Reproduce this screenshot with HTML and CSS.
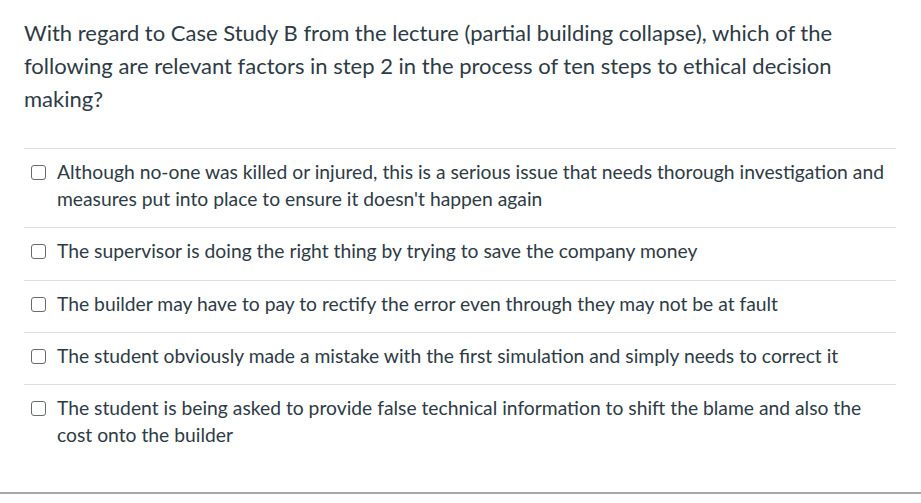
FILE: index.html
```html
<!DOCTYPE html>
<html>
<head>
<meta charset="utf-8">
<link rel="stylesheet" href="styles.css">
</head>
<body>
<div class="quiz">
  <div class="question">
    <p class="question-text">With regard to Case Study B from the lecture (partial building collapse), which of the following are relevant factors in step 2 in the process of ten steps to ethical decision making?</p>
    <div class="answers">
      <label class="answer"><span class="box"></span><span class="answer-text">Although no-one was killed or injured, this is a serious issue that needs thorough investigation and measures put into place to ensure it doesn't happen again</span></label>
      <label class="answer"><span class="box"></span><span class="answer-text">The supervisor is doing the right thing by trying to save the company money</span></label>
      <label class="answer"><span class="box"></span><span class="answer-text">The builder may have to pay to rectify the error even through they may not be at fault</span></label>
      <label class="answer"><span class="box"></span><span class="answer-text">The student obviously made a mistake with the first simulation and simply needs to correct it</span></label>
      <label class="answer"><span class="box"></span><span class="answer-text">The student is being asked to provide false technical information to shift the blame and also the cost onto the builder</span></label>
    </div>
  </div>
  <div class="footer-rule"></div>
</div>
</body>
</html>
```

FILE: styles.css
```css
html, body {
  margin: 0;
  padding: 0;
  background: #ffffff;
}
body {
  font-family: Lato, "Open Sans", sans-serif;
  color: #2d3b45;
  width: 921px;
  height: 503px;
  overflow: hidden;
}
.question {
  padding: 16px 25px 0 24px;
}
.question-text {
  margin: 0 0 33px 0;
  font-size: 22px;
  line-height: 33px;
}
.answers {
  display: flex;
  flex-direction: column;
}
.answer {
  display: flex;
  align-items: flex-start;
  gap: 11px;
  border-top: 1px solid #dcdedf;
  padding: 9px 0 15.3px 7px;
  font-size: 19.3px;
  line-height: 27px;
}
.answer:last-child {
  padding-bottom: 44px;
}
.box {
  flex: none;
  width: 13px;
  height: 13px;
  margin-top: 7px;
  border: 1.5px solid #666a6d;
  border-radius: 3px;
  background: #fff;
}
.answer-text {
  flex: 1;
  padding-right: 8px;
}
.footer-rule {
  border-top: 2px solid #a8a8a8;
}
```
